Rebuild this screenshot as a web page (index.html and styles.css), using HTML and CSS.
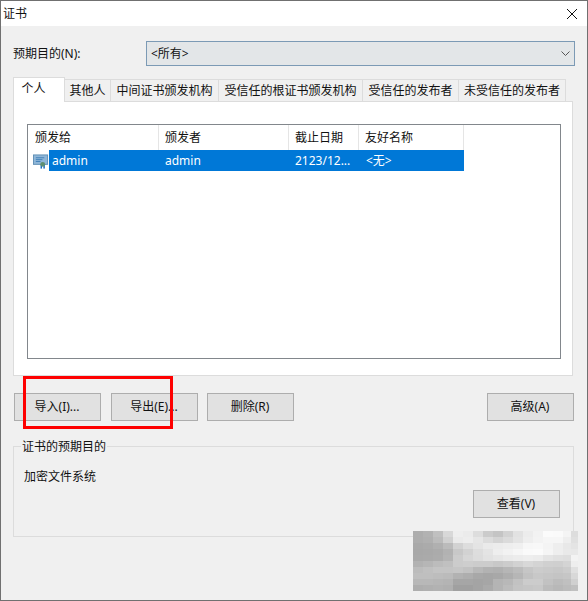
FILE: index.html
```html
<!DOCTYPE html>
<html lang="zh-CN">
<head>
<meta charset="utf-8">
<title>证书</title>
<link rel="stylesheet" href="styles.css">
</head>
<body>
<div class="window">
  <header class="titlebar">
    <span class="title">证书</span>
    <svg class="close" width="10" height="10" viewBox="0 0 10 10"><path d="M0 0L10 10M10 0L0 10" stroke="#111" stroke-width="1" fill="none"/></svg>
  </header>
  <main class="content">
    <div class="purpose">
      <span class="purpose-label">预期目的(N):</span>
      <div class="select">
        <span>&lt;所有&gt;</span>
        <svg width="9" height="6" viewBox="0 0 9 6"><path d="M0.5 0.5L4.5 4.5L8.5 0.5" stroke="#555" stroke-width="1" fill="none"/></svg>
      </div>
    </div>
    <nav class="tabs">
      <div class="tab active t1">个人</div>
      <div class="tab t2">其他人</div>
      <div class="tab t3">中间证书颁发机构</div>
      <div class="tab t4">受信任的根证书颁发机构</div>
      <div class="tab t5">受信任的发布者</div>
      <div class="tab t6">未受信任的发布者</div>
    </nav>
    <section class="panel">
      <div class="list">
        <div class="list-head">
          <div class="hcell c1">颁发给</div>
          <div class="hcell c2">颁发者</div>
          <div class="hcell c3">截止日期</div>
          <div class="hcell c4">友好名称</div>
        </div>
        <div class="list-row">
          <svg class="cert" width="17" height="16" viewBox="0 0 17 16">
            <rect x="0.5" y="0.5" width="15" height="10" fill="#8fb6d8" stroke="#5f8fb5"/>
            <path d="M3 3.5H12M3 5.5H10M3 7.5H8" stroke="#3f7fb8" stroke-width="1"/>
            <rect x="8" y="11" width="1.6" height="4" fill="#1f6fc0"/>
            <rect x="11" y="11" width="1.6" height="4" fill="#1f6fc0"/>
            <circle cx="10.3" cy="10.5" r="2.6" fill="#5f8f70"/>
          </svg>
          <div class="selected">
            <div class="cell s1">admin</div>
            <div class="cell c2">admin</div>
            <div class="cell c3">2123/12...</div>
            <div class="cell c4">&lt;无&gt;</div>
          </div>
        </div>
      </div>
    </section>
    <div class="actions">
      <button class="btn first">导入(I)...</button>
      <button class="btn">导出(E)...</button>
      <button class="btn">删除(R)</button>
      <button class="btn push">高级(A)</button>
    </div>
    <fieldset class="group">
      <legend>证书的预期目的</legend>
      <p class="group-text">加密文件系统</p>
      <div class="group-foot"><button class="btn">查看(V)</button></div>
    </fieldset>
  </main>
  <div class="redbox"></div>
  <svg class="mosaic" width="165" height="60" viewBox="0 0 165 60" shape-rendering="crispEdges">
    <g>
      <rect x="0" width="10" height="6" fill="#adadad"/><rect x="10" width="10" height="6" fill="#b2b2b2"/><rect x="20" width="10" height="6" fill="#c0c0c0"/><rect x="30" width="10" height="6" fill="#d8d8d8"/><rect x="40" width="10" height="6" fill="#eeeeee"/><rect x="50" width="10" height="6" fill="#ebebeb"/><rect x="60" width="10" height="6" fill="#dddddd"/><rect x="70" width="10" height="6" fill="#cbcbcb"/><rect x="80" width="10" height="6" fill="#c4c4c4"/><rect x="90" width="10" height="6" fill="#d2d2d2"/><rect x="100" width="10" height="6" fill="#e2e2e2"/><rect x="110" width="10" height="6" fill="#ececec"/><rect x="120" width="10" height="6" fill="#f2f2f2"/><rect x="130" width="10" height="6" fill="#fbfbfb"/><rect x="140" width="10" height="6" fill="#fafafa"/><rect x="150" width="8" height="6" fill="#f4f4f4"/><rect x="158" width="7" height="6" fill="#dddddd"/>
    </g>
    <g transform="translate(0 6)">
      <rect x="0" width="10" height="6" fill="#adadad"/><rect x="10" width="10" height="6" fill="#b0b0b0"/><rect x="20" width="10" height="6" fill="#bbbbbb"/><rect x="30" width="10" height="6" fill="#d0d0d0"/><rect x="40" width="10" height="6" fill="#eaeaea"/><rect x="50" width="10" height="6" fill="#ededed"/><rect x="60" width="10" height="6" fill="#e6e6e6"/><rect x="70" width="10" height="6" fill="#dcdcdc"/><rect x="80" width="10" height="6" fill="#d4d4d4"/><rect x="90" width="10" height="6" fill="#dbdbdb"/><rect x="100" width="10" height="6" fill="#e4e4e4"/><rect x="110" width="10" height="6" fill="#eeeeee"/><rect x="120" width="10" height="6" fill="#f3f3f3"/><rect x="130" width="10" height="6" fill="#f6f6f6"/><rect x="140" width="10" height="6" fill="#f6f6f6"/><rect x="150" width="8" height="6" fill="#eeeeee"/><rect x="158" width="7" height="6" fill="#e0e0e0"/>
    </g>
    <g transform="translate(0 12)">
      <rect x="0" width="10" height="6" fill="#a9a9a9"/><rect x="10" width="10" height="6" fill="#ababab"/><rect x="20" width="10" height="6" fill="#b0b0b0"/><rect x="30" width="10" height="6" fill="#bbbbbb"/><rect x="40" width="10" height="6" fill="#d2d2d2"/><rect x="50" width="10" height="6" fill="#dddddd"/><rect x="60" width="10" height="6" fill="#e4e4e4"/><rect x="70" width="10" height="6" fill="#eaeaea"/><rect x="80" width="10" height="6" fill="#ececec"/><rect x="90" width="10" height="6" fill="#eeeeee"/><rect x="100" width="10" height="6" fill="#f0f0f0"/><rect x="110" width="10" height="6" fill="#f7f7f7"/><rect x="120" width="10" height="6" fill="#f8f8f8"/><rect x="130" width="10" height="6" fill="#f4f4f4"/><rect x="140" width="10" height="6" fill="#eeeeee"/><rect x="150" width="8" height="6" fill="#e8e8e8"/><rect x="158" width="7" height="6" fill="#e4e4e4"/>
    </g>
    <g transform="translate(0 18)">
      <rect x="0" width="10" height="6" fill="#a8a8a8"/><rect x="10" width="10" height="6" fill="#a9a9a9"/><rect x="20" width="10" height="6" fill="#ababab"/><rect x="30" width="10" height="6" fill="#b2b2b2"/><rect x="40" width="10" height="6" fill="#c8c8c8"/><rect x="50" width="10" height="6" fill="#d2d2d2"/><rect x="60" width="10" height="6" fill="#dddddd"/><rect x="70" width="10" height="6" fill="#e4e4e4"/><rect x="80" width="10" height="6" fill="#eeeeee"/><rect x="90" width="10" height="6" fill="#f2f2f2"/><rect x="100" width="10" height="6" fill="#f6f6f6"/><rect x="110" width="10" height="6" fill="#fafafa"/><rect x="120" width="10" height="6" fill="#fbfbfb"/><rect x="130" width="10" height="6" fill="#f5f5f5"/><rect x="140" width="10" height="6" fill="#eeeeee"/><rect x="150" width="8" height="6" fill="#e9e9e9"/><rect x="158" width="7" height="6" fill="#e8e8e8"/>
    </g>
    <g transform="translate(0 24)">
      <rect x="0" width="10" height="6" fill="#a9a9a9"/><rect x="10" width="10" height="6" fill="#aaaaaa"/><rect x="20" width="10" height="6" fill="#acacac"/><rect x="30" width="10" height="6" fill="#b4b4b4"/><rect x="40" width="10" height="6" fill="#cccccc"/><rect x="50" width="10" height="6" fill="#d6d6d6"/><rect x="60" width="10" height="6" fill="#dcdcdc"/><rect x="70" width="10" height="6" fill="#e2e2e2"/><rect x="80" width="10" height="6" fill="#e6e6e6"/><rect x="90" width="10" height="6" fill="#eaeaea"/><rect x="100" width="10" height="6" fill="#ececec"/><rect x="110" width="10" height="6" fill="#eeeeee"/><rect x="120" width="10" height="6" fill="#ececec"/><rect x="130" width="10" height="6" fill="#e4e4e4"/><rect x="140" width="10" height="6" fill="#e0e0e0"/><rect x="150" width="8" height="6" fill="#dedede"/><rect x="158" width="7" height="6" fill="#f3f3f3"/>
    </g>
    <g transform="translate(0 30)">
      <rect x="0" width="10" height="6" fill="#b2b2b2"/><rect x="10" width="10" height="6" fill="#b6b6b6"/><rect x="20" width="10" height="6" fill="#bcbcbc"/><rect x="30" width="10" height="6" fill="#c0c0c0"/><rect x="40" width="10" height="6" fill="#cccccc"/><rect x="50" width="10" height="6" fill="#cecece"/><rect x="60" width="10" height="6" fill="#cccccc"/><rect x="70" width="10" height="6" fill="#cccccc"/><rect x="80" width="10" height="6" fill="#c8c8c8"/><rect x="90" width="10" height="6" fill="#cccccc"/><rect x="100" width="10" height="6" fill="#d2d2d2"/><rect x="110" width="10" height="6" fill="#d8d8d8"/><rect x="120" width="10" height="6" fill="#d4d4d4"/><rect x="130" width="10" height="6" fill="#d0d0d0"/><rect x="140" width="10" height="6" fill="#cfcfcf"/><rect x="150" width="8" height="6" fill="#d4d4d4"/><rect x="158" width="7" height="6" fill="#eeeeee"/>
    </g>
    <g transform="translate(0 36)">
      <rect x="0" width="10" height="6" fill="#bcbcbc"/><rect x="10" width="10" height="6" fill="#c0c0c0"/><rect x="20" width="10" height="6" fill="#c4c4c4"/><rect x="30" width="10" height="6" fill="#c4c4c4"/><rect x="40" width="10" height="6" fill="#c6c6c6"/><rect x="50" width="10" height="6" fill="#c2c2c2"/><rect x="60" width="10" height="6" fill="#b8b8b8"/><rect x="70" width="10" height="6" fill="#b2b2b2"/><rect x="80" width="10" height="6" fill="#b0b0b0"/><rect x="90" width="10" height="6" fill="#b6b6b6"/><rect x="100" width="10" height="6" fill="#bcbcbc"/><rect x="110" width="10" height="6" fill="#c6c6c6"/><rect x="120" width="10" height="6" fill="#cccccc"/><rect x="130" width="10" height="6" fill="#cacaca"/><rect x="140" width="10" height="6" fill="#c8c8c8"/><rect x="150" width="8" height="6" fill="#cccccc"/><rect x="158" width="7" height="6" fill="#e0e0e0"/>
    </g>
    <g transform="translate(0 42)">
      <rect x="0" width="10" height="6" fill="#bfbfbf"/><rect x="10" width="10" height="6" fill="#bfbfbf"/><rect x="20" width="10" height="6" fill="#bdbdbd"/><rect x="30" width="10" height="6" fill="#bbbbbb"/><rect x="40" width="10" height="6" fill="#b2b2b2"/><rect x="50" width="10" height="6" fill="#aeaeae"/><rect x="60" width="10" height="6" fill="#a8a8a8"/><rect x="70" width="10" height="6" fill="#a6a6a6"/><rect x="80" width="10" height="6" fill="#a8a8a8"/><rect x="90" width="10" height="6" fill="#aeaeae"/><rect x="100" width="10" height="6" fill="#b6b6b6"/><rect x="110" width="10" height="6" fill="#c2c2c2"/><rect x="120" width="10" height="6" fill="#c8c8c8"/><rect x="130" width="10" height="6" fill="#c6c6c6"/><rect x="140" width="10" height="6" fill="#c4c4c4"/><rect x="150" width="8" height="6" fill="#c6c6c6"/><rect x="158" width="7" height="6" fill="#d8d8d8"/>
    </g>
    <g transform="translate(0 48)">
      <rect x="0" width="10" height="6" fill="#b8b8b8"/><rect x="10" width="10" height="6" fill="#b8b8b8"/><rect x="20" width="10" height="6" fill="#b6b6b6"/><rect x="30" width="10" height="6" fill="#b4b4b4"/><rect x="40" width="10" height="6" fill="#a6a6a6"/><rect x="50" width="10" height="6" fill="#a6a6a6"/><rect x="60" width="10" height="6" fill="#a4a4a4"/><rect x="70" width="10" height="6" fill="#a6a6a6"/><rect x="80" width="10" height="6" fill="#b4b4b4"/><rect x="90" width="10" height="6" fill="#b8b8b8"/><rect x="100" width="10" height="6" fill="#c2c2c2"/><rect x="110" width="10" height="6" fill="#cccccc"/><rect x="120" width="10" height="6" fill="#cccccc"/><rect x="130" width="10" height="6" fill="#c2c2c2"/><rect x="140" width="10" height="6" fill="#bcbcbc"/><rect x="150" width="8" height="6" fill="#c0c0c0"/><rect x="158" width="7" height="6" fill="#d0d0d0"/>
    </g>
    <g transform="translate(0 54)">
      <rect x="0" width="10" height="6" fill="#aeaeae"/><rect x="10" width="10" height="6" fill="#b0b0b0"/><rect x="20" width="10" height="6" fill="#b2b2b2"/><rect x="30" width="10" height="6" fill="#b0b0b0"/><rect x="40" width="10" height="6" fill="#a0a0a0"/><rect x="50" width="10" height="6" fill="#a0a0a0"/><rect x="60" width="10" height="6" fill="#a4a4a4"/><rect x="70" width="10" height="6" fill="#aaaaaa"/><rect x="80" width="10" height="6" fill="#b4b4b4"/><rect x="90" width="10" height="6" fill="#bcbcbc"/><rect x="100" width="10" height="6" fill="#c4c4c4"/><rect x="110" width="10" height="6" fill="#c6c6c6"/><rect x="120" width="10" height="6" fill="#c8c8c8"/><rect x="130" width="10" height="6" fill="#bcbcbc"/><rect x="140" width="10" height="6" fill="#b8b8b8"/><rect x="150" width="8" height="6" fill="#bcbcbc"/><rect x="158" width="7" height="6" fill="#c0c0c0"/>
    </g>
  </svg>
</div>
</body>
</html>
```
FILE: styles.css
```css
* { box-sizing: border-box; }
html, body { margin: 0; padding: 0; }
body {
  font-family: "Noto Sans", "Noto Sans CJK SC", sans-serif;
  font-size: 12px;
  line-height: 16px;
  color: #111;
  background: #f0f0f0;
}
.window {
  position: relative;
  width: 588px;
  height: 601px;
  border: 1px solid #707070;
  background: #f0f0f0;
  overflow: hidden;
  display: flex;
  flex-direction: column;
}
.titlebar {
  height: 25px;
  flex: none;
  background: #fff;
  display: flex;
  align-items: center;
  justify-content: space-between;
  padding: 0 10px 0 2px;
}
.content {
  flex: 1;
  padding: 15px 12px 0;
}
.purpose {
  display: flex;
  align-items: center;
  height: 25px;
}
.purpose-label { width: 133px; }
.select {
  width: 429px;
  height: 25px;
  background: #e3e6e8;
  border: 1px solid #7c9ab5;
  display: flex;
  align-items: center;
  justify-content: space-between;
  padding: 0 4px 0 4px;
}
.tabs {
  display: flex;
  align-items: flex-end;
  margin-top: 11px;
  height: 25px;
  position: relative;
  z-index: 1;
}
.tab {
  height: 23px;
  background: #f0f0f0;
  border: 1px solid #dcdcdc;
  border-left: 0;
  display: flex;
  align-items: center;
  justify-content: center;
  padding-top: 1px;
}
.tab.active {
  height: 25px;
  background: #fff;
  border-left: 1px solid #dcdcdc;
  border-bottom: 0;
  padding: 0 11px 2px 0;
}
.t1 { width: 52px; }
.t2 { width: 46px; }
.t3 { width: 108px; }
.t4 { width: 144px; }
.t5 { width: 96px; }
.t6 { width: 107px; }
.panel {
  width: 560px;
  height: 275px;
  margin-top: -1px;
  background: #fff;
  border: 1px solid #dcdcdc;
  padding: 22px 0 0 13px;
}
.list {
  width: 534px;
  height: 235px;
  border: 1px solid #82878c;
  background: #fff;
}
.list-head {
  display: flex;
  height: 25px;
}
.hcell {
  border-right: 1px solid #e5e5e5;
  padding-left: 6px;
  line-height: 25px;
}
.c1 { width: 131px; padding-left: 7px; }
.c2 { width: 130px; padding-left: 6px; }
.c3 { width: 70px; padding-left: 6px; }
.c4 { width: 105px; padding-left: 6px; }
.list-row {
  display: flex;
  height: 21px;
  padding-left: 5px;
}
.cert { margin-top: 4px; flex: none; width: 16px; }
.selected {
  display: flex;
  background: #0078d7;
  color: #fff;
  height: 21px;
  line-height: 21px;
}
.s1 { width: 110px; padding-left: 3px; }
.cell { white-space: nowrap; }
.cell.c4 { padding-left: 7px; }
.actions {
  display: flex;
  gap: 9px;
  margin-top: 17px;
  padding-left: 1px;
  width: 561px;
}
.btn {
  width: 87px;
  height: 28px;
  background: #e1e1e1;
  border: 1px solid #adadad;
  font: inherit;
  color: #111;
  padding: 0 1px 0 0;
}
.first { margin-right: 1px; }
.push { margin-left: auto; }
.group {
  width: 561px;
  height: 100px;
  margin: 16px 0 0;
  padding: 0 13px 0 10px;
  border: 1px solid #dcdcdc;
  min-width: 0;
  position: relative;
}
.group legend {
  padding: 2px 1px 0 1px;
  margin-left: -3px;
  line-height: 16px;
}
.group-text {
  margin: 14px 0 0;
}
.group-foot {
  display: flex;
  justify-content: flex-end;
  margin-top: 5px;
}
.redbox {
  position: absolute;
  left: 22px;
  top: 375px;
  width: 150px;
  height: 53px;
  border: 3px solid #fe0000;
}
.mosaic {
  position: absolute;
  left: 412px;
  top: 530px;
}
```
